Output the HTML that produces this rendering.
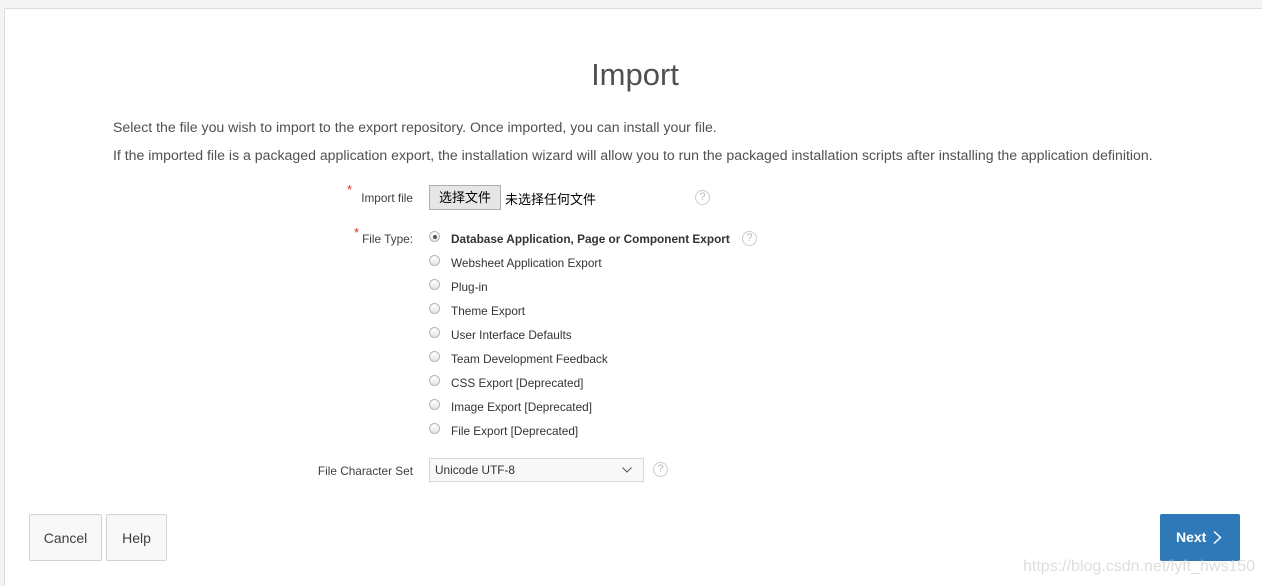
<!DOCTYPE html>
<html style="overflow:hidden"><head><meta charset="utf-8"><style>
html,body{overflow:hidden}
body{margin:0;width:1262px;height:586px;background:#f4f4f4;font-family:"Liberation Sans","Noto Sans CJK SC",sans-serif;position:relative}
.panel{position:absolute;left:4px;top:8px;width:1262px;height:600px;background:#fff;border:1px solid #dcdcdc}
.a{position:absolute;white-space:nowrap}
h1{position:absolute;top:57px;left:0;width:1270px;text-align:center;margin:0;font-weight:300;font-size:31px;color:#505050}
.p{font-size:14.1px;color:#505050}
.lbl{font-size:11.8px;color:#404040;text-align:right;right:849px}
.req{color:#e0301e;font-size:13px}
.opt{font-size:11.8px;color:#333;left:451px}
.r{position:absolute;left:429px;width:11px;height:11px;border-radius:50%;border:1px solid #b5b5b5;background:linear-gradient(#fff,#e6e6e6);box-sizing:border-box}
.q{position:absolute;width:15px;height:15px;border-radius:50%;border:1px solid #ccc;box-sizing:border-box;color:#bbb;font-size:11px;text-align:center;line-height:13px}
.btn{position:absolute;top:514px;height:47px;background:#f8f8f8;border:1px solid #d3d3d3;border-radius:2px;box-sizing:border-box;font-size:14px;color:#404040;text-align:center;line-height:46px}
</style></head><body>
<div class="panel"></div>
<h1>Import</h1>
<div class="a p" style="left:113px;top:119px">Select the file you wish to import to the export repository. Once imported, you can install your file.</div>
<div class="a p" style="left:113px;top:147px">If the imported file is a packaged application export, the installation wizard will allow you to run the packaged installation scripts after installing the application definition.</div>
<div class="a req" style="left:347px;top:182px">*</div>
<div class="a lbl" style="top:191px">Import file</div>
<div class="a" style="left:429px;top:185px;width:72px;height:25px;border:1px solid #adadad;background:#e6e6e6;box-sizing:border-box;font-size:13px;text-align:center;line-height:23px;color:#000">选择文件</div>
<div class="a" style="left:505px;top:189px;font-size:13px;color:#000">未选择任何文件</div>
<div class="q" style="left:695px;top:190px">?</div>
<div class="a req" style="left:354px;top:225px">*</div>
<div class="a lbl" style="top:232px">File Type:</div>
<div class="r" style="top:231px"><div style="position:absolute;left:2.5px;top:2.5px;width:4px;height:4px;border-radius:50%;background:#555"></div></div>
<div class="a opt" style="top:232px;font-weight:bold">Database Application, Page or Component Export</div>
<div class="q" style="left:742px;top:231px">?</div>
<div class="r" style="top:255px"></div><div class="a opt" style="top:256px">Websheet Application Export</div>
<div class="r" style="top:279px"></div><div class="a opt" style="top:280px">Plug-in</div>
<div class="r" style="top:303px"></div><div class="a opt" style="top:304px">Theme Export</div>
<div class="r" style="top:327px"></div><div class="a opt" style="top:328px">User Interface Defaults</div>
<div class="r" style="top:351px"></div><div class="a opt" style="top:352px">Team Development Feedback</div>
<div class="r" style="top:375px"></div><div class="a opt" style="top:376px">CSS Export [Deprecated]</div>
<div class="r" style="top:399px"></div><div class="a opt" style="top:400px">Image Export [Deprecated]</div>
<div class="r" style="top:423px"></div><div class="a opt" style="top:424px">File Export [Deprecated]</div>
<div class="a lbl" style="top:464px">File Character Set</div>
<div class="a" style="left:429px;top:458px;width:215px;height:24px;border:1px solid #d6d6d6;background:#f8f8f8;box-sizing:border-box;font-size:11.8px;color:#333;line-height:22px;padding-left:5px">Unicode UTF-8
<svg style="position:absolute;right:11px;top:8px" width="10" height="6"><path d="M0.5 0.5L5 5L9.5 0.5" fill="none" stroke="#555" stroke-width="1"/></svg></div>
<div class="q" style="left:653px;top:462px">?</div>
<div class="btn" style="left:29px;width:73px">Cancel</div>
<div class="btn" style="left:106px;width:61px">Help</div>
<div class="a" style="left:1160px;top:514px;width:80px;height:47px;background:#2f79b9;border-radius:2px;color:#fff;font-weight:bold;font-size:14px;line-height:47px;padding-left:16px;box-sizing:border-box">Next<svg style="position:absolute;left:53px;top:17px" width="9" height="13"><path d="M1 0.5L7.5 6.5L1 12.5" fill="none" stroke="#fff" stroke-width="1.5"/></svg></div>
<div class="a" style="left:1023px;top:558px;font-size:16px;color:rgba(200,200,200,0.6)">https://blog.csdn.net/lyft_hws150</div>
</body></html>
